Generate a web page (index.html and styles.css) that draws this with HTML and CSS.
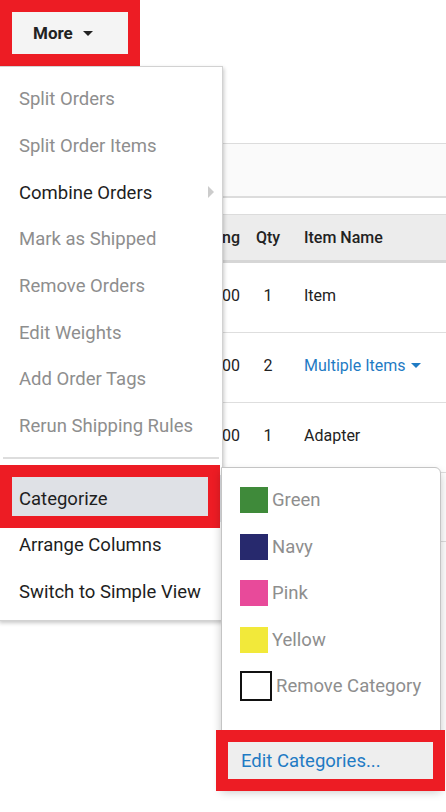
FILE: index.html
```
<!DOCTYPE html>
<html>
<head>
<meta charset="utf-8">
<link rel="stylesheet" href="styles.css">
</head>
<body>
<div class="page">
  <header class="toolbar">
    <div class="annot-frame">
      <button class="more-btn">More <span class="caret-down"></span></button>
    </div>
  </header>

  <section class="grid">
    <div class="filter-bar"></div>
    <div class="table">
      <div class="row head">
        <div class="col-a">Shipping</div>
        <div class="col-b">Qty</div>
        <div class="col-c">Item Name</div>
      </div>
      <div class="row">
        <div class="col-a">$0.00</div>
        <div class="col-b">1</div>
        <div class="col-c">Item</div>
      </div>
      <div class="row">
        <div class="col-a">$0.00</div>
        <div class="col-b">2</div>
        <div class="col-c link">Multiple Items <span class="caret-blue"></span></div>
      </div>
      <div class="row">
        <div class="col-a">$0.00</div>
        <div class="col-b">1</div>
        <div class="col-c">Adapter</div>
      </div>
      <div class="row short"></div>
    </div>
  </section>

  <nav class="menu">
    <div class="item disabled">Split Orders</div>
    <div class="item disabled">Split Order Items</div>
    <div class="item has-sub">Combine Orders<span class="caret-right"></span></div>
    <div class="item disabled">Mark as Shipped</div>
    <div class="item disabled">Remove Orders</div>
    <div class="item disabled">Edit Weights</div>
    <div class="item disabled">Add Order Tags</div>
    <div class="item disabled">Rerun Shipping Rules</div>
    <div class="sep"></div>
    <div class="item active annotated">Categorize</div>
    <div class="item">Arrange Columns</div>
    <div class="item">Switch to Simple View</div>
  </nav>

  <div class="submenu">
    <div class="cat"><span class="swatch green"></span>Green</div>
    <div class="cat"><span class="swatch navy"></span>Navy</div>
    <div class="cat"><span class="swatch pink"></span>Pink</div>
    <div class="cat"><span class="swatch yellow"></span>Yellow</div>
    <div class="cat"><span class="swatch none"></span>Remove Category</div>
    <div class="edit annotated-sub">Edit Categories...</div>
  </div>
</div>
</body>
</html>
```

FILE: styles.css
```
* { box-sizing: border-box; }
html, body {
  margin: 0;
  padding: 0;
  background: #ffffff;
}
body {
  font-family: Roboto, "Liberation Sans", Arial, sans-serif;
  color: #222222;
}
.page {
  position: relative;
  width: 446px;
  height: 812px;
  overflow: hidden;
}

/* toolbar */
.toolbar {
  display: flex;
  height: 66px;
}
.annot-frame {
  border: 12px solid #ed1c24;
  width: 140px;
  height: 66px;
}
.more-btn {
  width: 116px;
  height: 42px;
  border: 0;
  margin: 0;
  padding: 0 0 0 21px;
  background: #f4f4f4;
  font-family: Roboto, "Liberation Sans", Arial, sans-serif;
  font-weight: 700;
  font-size: 17px;
  color: #222;
  display: flex;
  align-items: center;
  gap: 10px;
}
.caret-down {
  width: 0;
  height: 0;
  border-left: 5px solid transparent;
  border-right: 5px solid transparent;
  border-top: 5px solid #222;
}

/* background grid */
.grid {
  padding-top: 77px;
}
.filter-bar {
  height: 55px;
  background: #fafafa;
  border-top: 1px solid #dcdcdc;
  border-bottom: 2px solid #dcdcdc;
}
.table {
  margin-top: 16px;
}
.row {
  display: flex;
  align-items: center;
  height: 70px;
  padding-bottom: 4px;
  border-bottom: 1px solid #dedede;
  font-size: 16px;
  color: #222;
}
.row.head {
  height: 49px;
  padding-bottom: 0;
  background: #ececec;
  border-top: 1px solid #dcdcdc;
  border-bottom: 3px solid #d6d6d6;
  font-weight: 500;
  color: #222;
}
.row.short { height: 69px; }
.col-a {
  width: 240px;
  text-align: right;
  white-space: nowrap;
}
.col-b {
  width: 24px;
  margin-left: 16px;
  text-align: center;
}
.col-c {
  margin-left: 24px;
  display: flex;
  align-items: center;
  gap: 5px;
}
.col-c.link { color: #1f7bc4; }
.caret-blue {
  width: 0;
  height: 0;
  border-left: 5px solid transparent;
  border-right: 5px solid transparent;
  border-top: 5px solid #1f7bc4;
}

/* main dropdown menu */
.menu {
  position: absolute;
  left: -2px;
  top: 66px;
  width: 225px;
  height: 555px;
  background: #ffffff;
  border: 1px solid #d2d2d2;
  box-shadow: 1px 2px 4px rgba(0,0,0,0.22);
  padding: 9px 0 4px;
}
.item {
  position: relative;
  height: 46.67px;
  display: flex;
  align-items: center;
  padding-left: 20px;
  font-size: 18.5px;
  color: #1e1e1e;
  white-space: nowrap;
}
.item.disabled { color: #8e8e8e; }
.item.active { background: #dfe1e6; }
.caret-right {
  position: absolute;
  right: 8px;
  top: 17px;
  width: 0;
  height: 0;
  border-top: 6px solid transparent;
  border-bottom: 6px solid transparent;
  border-left: 6px solid #cccccc;
}
.sep {
  height: 2px;
  margin: 8px 3px 16px 4px;
  background: #dddddd;
}
.annotated::after {
  content: "";
  position: absolute;
  left: 1px;
  right: 2px;
  top: -10px;
  bottom: -6px;
  border: 12px solid #ed1c24;
}

/* submenu */
.submenu {
  position: absolute;
  left: 221px;
  top: 467px;
  width: 220px;
  height: 320px;
  background: #ffffff;
  border: 1px solid #c4c4c4;
  border-top-right-radius: 6px;
  box-shadow: 0 5px 10px rgba(0,0,0,0.22);
  padding-top: 9px;
}
.cat {
  height: 46.5px;
  display: flex;
  align-items: center;
  padding-left: 18px;
  font-size: 18.5px;
  color: #8e8e8e;
  white-space: nowrap;
}
.swatch {
  display: inline-block;
  width: 28px;
  height: 26px;
  margin-right: 4px;
}
.swatch.green { background: #3f8a3a; }
.swatch.navy { background: #27296d; }
.swatch.pink { background: #e84a9a; }
.swatch.yellow { background: #f2e93a; }
.swatch.none {
  width: 32px;
  height: 30px;
  border: 2px solid #111111;
  background: #ffffff;
  margin-right: 4px;
}
.edit {
  position: relative;
  margin-top: 28px;
  height: 46px;
  display: flex;
  align-items: center;
  padding-left: 19px;
  background: #eeeeee;
  color: #1f7bc4;
  font-size: 18.5px;
  white-space: nowrap;
}
.annotated-sub::after {
  content: "";
  position: absolute;
  left: -6px;
  right: -5px;
  top: -8px;
  bottom: -7px;
  border: 12px solid #ed1c24;
}
```
